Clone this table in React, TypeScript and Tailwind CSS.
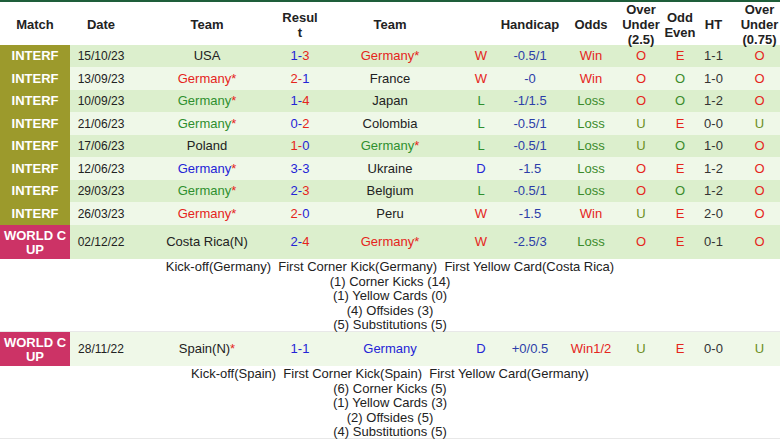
const RED = "text-[#e5251c]";
const GREEN = "text-[#2f8f2f]";
const BLUE = "text-[#2424d6]";
const DARK = "text-[#222]";

const cols =
  "grid grid-cols-[70px_62px_150px_36px_144px_38px_60px_62px_38px_40px_27px_53px]";

type Team = { name: string; color: string; star?: boolean };

type Match = {
  league: "INTERF" | "WC";
  date: string;
  home: Team;
  away: Team;
  score: [number, number];
  res: string;
  hcap: string;
  odds: string;
  ou: string;
  oe: string;
  ht: string;
  ou2: string;
  details?: string[];
};

const g = (color: string): Team => ({ name: "Germany", color, star: true });
const t = (name: string): Team => ({ name, color: DARK });

const matches: Match[] = [
  { league: "INTERF", date: "15/10/23", home: t("USA"), away: g(RED), score: [1, 3], res: "W", hcap: "-0.5/1", odds: "Win", ou: "O", oe: "E", ht: "1-1", ou2: "O" },
  { league: "INTERF", date: "13/09/23", home: g(RED), away: t("France"), score: [2, 1], res: "W", hcap: "-0", odds: "Win", ou: "O", oe: "O", ht: "1-0", ou2: "O" },
  { league: "INTERF", date: "10/09/23", home: g(GREEN), away: t("Japan"), score: [1, 4], res: "L", hcap: "-1/1.5", odds: "Loss", ou: "O", oe: "O", ht: "1-2", ou2: "O" },
  { league: "INTERF", date: "21/06/23", home: g(GREEN), away: t("Colombia"), score: [0, 2], res: "L", hcap: "-0.5/1", odds: "Loss", ou: "U", oe: "E", ht: "0-0", ou2: "U" },
  { league: "INTERF", date: "17/06/23", home: t("Poland"), away: g(GREEN), score: [1, 0], res: "L", hcap: "-0.5/1", odds: "Loss", ou: "U", oe: "O", ht: "1-0", ou2: "O" },
  { league: "INTERF", date: "12/06/23", home: g(BLUE), away: t("Ukraine"), score: [3, 3], res: "D", hcap: "-1.5", odds: "Loss", ou: "O", oe: "E", ht: "1-2", ou2: "O" },
  { league: "INTERF", date: "29/03/23", home: g(GREEN), away: t("Belgium"), score: [2, 3], res: "L", hcap: "-0.5/1", odds: "Loss", ou: "O", oe: "O", ht: "1-2", ou2: "O" },
  { league: "INTERF", date: "26/03/23", home: g(RED), away: t("Peru"), score: [2, 0], res: "W", hcap: "-1.5", odds: "Win", ou: "U", oe: "E", ht: "2-0", ou2: "O" },
  {
    league: "WC", date: "02/12/22", home: t("Costa Rica(N)"), away: g(RED), score: [2, 4], res: "W", hcap: "-2.5/3", odds: "Loss", ou: "O", oe: "E", ht: "0-1", ou2: "O",
    details: [
      "Kick-off(Germany)\u00a0\u00a0First Corner Kick(Germany)\u00a0\u00a0First Yellow Card(Costa Rica)",
      "(1) Corner Kicks (14)",
      "(1) Yellow Cards (0)",
      "(4) Offsides (3)",
      "(5) Substitutions (5)",
    ],
  },
  {
    league: "WC", date: "28/11/22", home: { name: "Spain(N)", color: DARK, star: true }, away: { name: "Germany", color: BLUE }, score: [1, 1], res: "D", hcap: "+0/0.5", odds: "Win1/2", ou: "U", oe: "E", ht: "0-0", ou2: "U",
    details: [
      "Kick-off(Spain)\u00a0\u00a0First Corner Kick(Spain)\u00a0\u00a0First Yellow Card(Germany)",
      "(6) Corner Kicks (5)",
      "(1) Yellow Cards (3)",
      "(2) Offsides (5)",
      "(4) Substitutions (5)",
    ],
  },
];

const resColor = (r: string) => (r === "W" ? RED : r === "L" ? GREEN : BLUE);
const oddsColor = (o: string) => (o.startsWith("Win") ? RED : "text-[#3b8b2b]");
const ouColor = (o: string) => (o === "O" ? RED : "text-[#6b8e23]");
const oeColor = (o: string) => (o === "E" ? RED : "text-[#3b8b2b]");

const TeamName = ({ team }: { team: Team }) => (
  <span className={team.color}>
    {team.name}
    {team.star && <span className={RED}>*</span>}
  </span>
);

const Score = ({ s }: { s: [number, number] }) => {
  const [a, b] = s;
  const ca = a > b ? RED : BLUE;
  const cb = b > a ? RED : BLUE;
  return (
    <span>
      <span className={ca}>{a}</span>
      <span className={ca}>-</span>
      <span className={cb}>{b}</span>
    </span>
  );
};

const Row = ({ m, i }: { m: Match; i: number }) => {
  const wc = m.league === "WC";
  const bg = i % 2 === 0 ? "bg-[#dcefcd]" : "bg-[#eff8e8]";
  const h = wc ? "h-[34px]" : i % 2 === 0 ? "h-[22px]" : "h-[23px]";
  const cell = "flex items-center justify-center";
  return (
    <>
      <div className={`${cols} ${h} ${bg} text-[13px]`}>
        <div
          className={`${cell} text-center font-bold text-white leading-[14px] ${
            wc ? "bg-[#cc3366] pt-[1px]" : "bg-[#9c9a2c]"
          }`}
        >
          {wc ? (
            <span>
              WORLD C
              <br />
              UP
            </span>
          ) : (
            "INTERF"
          )}
        </div>
        <div className={`${cell} text-[12px] ${DARK}`}>{m.date}</div>
        <div className={cell}>
          <TeamName team={m.home} />
        </div>
        <div className={cell}>
          <Score s={m.score} />
        </div>
        <div className={cell}>
          <TeamName team={m.away} />
        </div>
        <div className={`${cell} ${resColor(m.res)}`}>{m.res}</div>
        <div className={`${cell} text-[#2c3ea8]`}>{m.hcap}</div>
        <div className={`${cell} ${oddsColor(m.odds)}`}>{m.odds}</div>
        <div className={`${cell} ${ouColor(m.ou)}`}>{m.ou}</div>
        <div className={`${cell} ${oeColor(m.oe)}`}>{m.oe}</div>
        <div className={`${cell} text-[#333]`}>{m.ht}</div>
        <div className={`${cell} pl-[12px] ${ouColor(m.ou2)}`}>{m.ou2}</div>
      </div>
      {m.details && (
        <div className="flex h-[73px] flex-col items-center border-b border-[#e8e8e8] bg-white pt-[1px] text-[13px] leading-[14.5px] text-[#222]">
          {m.details.map((d) => (
            <div key={d}>{d}</div>
          ))}
        </div>
      )}
    </>
  );
};

export default function App() {
  const hd = "flex items-center justify-center text-center";
  return (
    <div className="h-[439px] w-[780px] overflow-hidden bg-white font-['Liberation_Sans',Arial,sans-serif]">
      <div className="h-[2px] bg-[#1e5e3a]" />
      <div className={`${cols} h-[43px] text-[13px] font-bold leading-[15px] text-[#222]`}>
        <div className={hd}>Match</div>
        <div className={hd}>Date</div>
        <div className={hd}>Team</div>
        <div className={hd}>
          Resul
          <br />t
        </div>
        <div className={hd}>Team</div>
        <div className={hd}></div>
        <div className={hd}>Handicap</div>
        <div className={hd}>Odds</div>
        <div className={hd}>
          Over
          <br />
          Under
          <br />
          (2.5)
        </div>
        <div className={hd}>
          Odd
          <br />
          Even
        </div>
        <div className={hd}>HT</div>
        <div className={`${hd} pl-[12px]`}>
          Over
          <br />
          Under
          <br />
          (0.75)
        </div>
      </div>
      {matches.map((m, i) => (
        <Row key={m.date} m={m} i={i} />
      ))}
    </div>
  );
}
